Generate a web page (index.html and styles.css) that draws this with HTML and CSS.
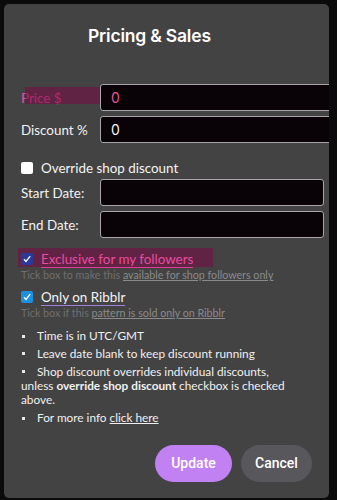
FILE: index.html
```html
<!DOCTYPE html>
<html>
<head>
<meta charset="utf-8">
<link rel="stylesheet" href="styles.css">
</head>
<body>
<div class="modal">
  <h1 class="title">Pricing &amp; Sales</h1>
  <div class="fields">
    <label class="label label-pink">Price $<span class="mark mark-price"></span></label>
    <div class="input input-wide input-pink">0</div>
    <label class="label">Discount %</label>
    <div class="input input-wide">0</div>
  </div>
  <div class="check-row override">
    <span class="box"></span>
    <span class="check-label">Override shop discount</span>
  </div>
  <div class="fields dates">
    <label class="label">Start Date:</label>
    <div class="input"></div>
    <label class="label">End Date:</label>
    <div class="input"></div>
  </div>
  <div class="check-group exclusive">
    <span class="mark mark-excl"></span>
    <div class="check-row">
      <span class="box box-checked box-dim"><svg viewBox="0 0 12 12" width="12" height="12"><path d="M3 6.2 L5 8.4 L9.2 3.2" fill="none" stroke="#fff" stroke-width="1.3"/></svg></span>
      <span class="check-label pink-label">Exclusive for my followers</span>
    </div>
    <div class="help">Tick box to make this <u>available for shop followers only</u></div>
  </div>
  <div class="check-group ribblr">
    <div class="check-row">
      <span class="box box-checked"><svg viewBox="0 0 12 12" width="12" height="12"><path d="M3 6.2 L5 8.4 L9.2 3.2" fill="none" stroke="#fff" stroke-width="1.3"/></svg></span>
      <span class="check-label purple-label">Only on Ribblr</span>
    </div>
    <div class="help">Tick box if this <u>pattern is sold only on Ribblr</u></div>
  </div>
  <ul class="notes">
    <li>Time is in UTC/GMT</li>
    <li>Leave date blank to keep discount running</li>
    <li>Shop discount overrides individual discounts, unless <b>override shop discount</b> checkbox is checked above.</li>
    <li>For more info <u>click here</u></li>
  </ul>
  <div class="actions">
    <button class="btn btn-update">Update</button>
    <button class="btn btn-cancel">Cancel</button>
  </div>
</div>
</body>
</html>
```
FILE: styles.css
```css
html, body {
  margin: 0;
  padding: 0;
  background: #0b0b0b;
}
body {
  width: 337px;
  height: 500px;
  overflow: hidden;
  font-family: "Lato", "Liberation Sans", sans-serif;
  color: #f2f2f2;
}
.modal {
  position: relative;
  margin: 4px 0 0 4px;
  width: 325px;
  height: 494px;
  background: #434343;
  border-radius: 5px;
  overflow: hidden;
  padding: 0 0 0 17px;
  box-sizing: border-box;
}
.title {
  margin: 0;
  padding: 21px 0 0 67px;
  font-family: "Inter", sans-serif;
  font-size: 17.5px;
  line-height: 22px;
  font-weight: 600;
  color: #fff;
  letter-spacing: -0.2px;
}
.fields {
  display: grid;
  grid-template-columns: 79px 240px;
  row-gap: 5px;
  margin-top: 37px;
  align-items: center;
}
.dates {
  grid-template-columns: 79px 224px;
  margin-top: 1px;
}
.label {
  position: relative;
  font-size: 13.4px;
  color: #f2f2f2;
}
.label-pink { color: #e4559c; }
.input {
  height: 27px;
  box-sizing: border-box;
  border: 1px solid #a9a4a8;
  border-radius: 3px;
  background: #090206;
  font-family: "Inter", sans-serif;
  font-size: 14px;
  line-height: 25px;
  padding-left: 10px;
  color: #f4f4f4;
}
.input-pink { color: #e4559c; }
.mark {
  position: absolute;
  background: rgba(120, 10, 70, 0.55);
}
.mark-price {
  left: 4px;
  top: -3px;
  width: 75px;
  height: 17px;
}
.check-row {
  display: flex;
  align-items: center;
  gap: 8px;
  height: 20px;
}
.override {
  margin-top: 15px;
}
.box {
  width: 12px;
  height: 12px;
  border-radius: 2px;
  background: #fff;
  flex: none;
  display: flex;
}
.box-checked { background: #1e90e0; }
.box-dim { background: #2a3a9a; }
.check-label {
  font-size: 13.4px;
  color: #f4f4f4;
}
.pink-label {
  color: #ea4ba2;
  border-bottom: 1.5px solid #e23c9a;
  line-height: 16px;
}
.purple-label {
  border-bottom: 1.5px solid #a37fd9;
  line-height: 16px;
}
.check-group {
  position: relative;
}
.exclusive { margin-top: 11px; }
.ribblr { margin-top: 5px; }
.mark-excl {
  left: -3px;
  top: -1px;
  width: 195px;
  height: 19px;
}
.exclusive .check-row { position: relative; }
.help {
  font-size: 10.7px;
  line-height: 14px;
  color: #6f6f6f;
  margin-top: -1px;
}
.help u { color: #8a8a8a; }
.notes {
  list-style: none;
  margin: 9px 34px 0 0;
  padding: 0;
  font-size: 11.8px;
  line-height: 14.3px;
  color: #f0f0f0;
}
.notes li {
  margin-bottom: 3.6px;
}
.notes li::before {
  content: "";
  display: inline-block;
  width: 3px;
  height: 3px;
  background: #e8e8e8;
  margin: 0 12px 2px 1px;
  vertical-align: middle;
}
.notes b { font-weight: 700; }
.actions {
  display: flex;
  justify-content: flex-end;
  gap: 9px;
  margin: 19px 17px 0 0;
}
.btn {
  height: 37px;
  border: none;
  border-radius: 19px;
  font-family: "Roboto", sans-serif;
  font-size: 14px;
  font-weight: 500;
  color: #fff;
}
.btn-update {
  width: 77px;
  background: #c181f2;
}
.btn-cancel {
  width: 71px;
  background: #58575c;
}
```
